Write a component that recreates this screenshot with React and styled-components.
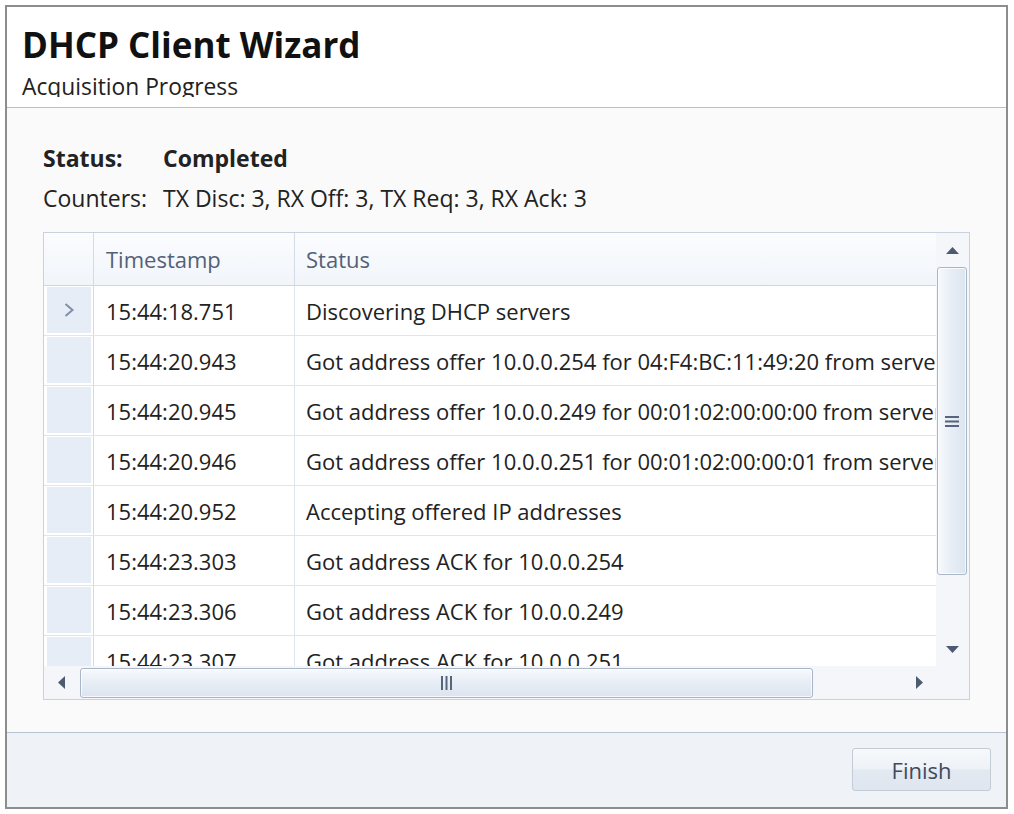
import React from "react";
import styled, { createGlobalStyle } from "styled-components";

const GlobalStyle = createGlobalStyle`
  html, body {
    margin: 0;
    padding: 0;
    background: #fff;
  }
  body {
    font-family: "Open Sans", "Liberation Sans", sans-serif;
  }
`;

const Window = styled.div`
  box-sizing: border-box;
  margin: 5px 0 0 5px;
  width: 1003px;
  height: 804px;
  border: 2px solid #8d8d8d;
  display: flex;
  flex-direction: column;
  background: #fafafa;
`;

const Header = styled.div`
  box-sizing: border-box;
  height: 101px;
  padding: 18px 0 0 15px;
  background: #fff;
  border-bottom: 1px solid #b7c1cf;
`;

const Title = styled.h1`
  margin: 0;
  font-size: 35px;
  line-height: 40px;
  font-weight: 700;
  color: #111;
`;

/* descenders are cut off by the header in the original dialog */
const Subtitle = styled.div`
  margin-top: 9px;
  height: 23px;
  overflow: hidden;
  font-size: 22.8px;
  line-height: 26px;
  color: #222;
`;

const Content = styled.div`
  flex: 1;
  padding: 37px 36px 0 36px;
`;

const InfoRow = styled.div`
  display: flex;
  font-size: 23px;
  line-height: 26px;
  color: #222;
  font-weight: ${(p) => (p.bold ? 700 : 400)};
  margin-bottom: ${(p) => p.gap}px;
`;

const InfoLabel = styled.span`
  width: 120px;
  flex-shrink: 0;
`;

const Table = styled.div`
  box-sizing: border-box;
  height: 468px;
  border: 1px solid #c8d1dd;
  display: grid;
  grid-template-columns: 1fr 33px;
  grid-template-rows: 1fr 33px;
  background: #fff;
`;

const Viewport = styled.div`
  overflow: hidden;
  background: #fff;
`;

const GridRow = styled.div`
  box-sizing: border-box;
  display: grid;
  grid-template-columns: 50px 201px 760px;
  height: ${(p) => (p.head ? 53 : 50)}px;
  border-bottom: 1px solid ${(p) => (p.head ? "#cdd6e2" : "#dde5f0")};
  background: ${(p) =>
    p.head ? "linear-gradient(#fbfcfe, #f1f5fa)" : "#fff"};
  font-size: 22px;
  color: ${(p) => (p.head ? "#536178" : "#222")};
  white-space: nowrap;
`;

const Cell = styled.div`
  box-sizing: border-box;
  display: flex;
  align-items: center;
  padding-left: ${(p) => p.pad}px;
  border-right: 1px solid ${(p) => (p.head ? "#d3dbe6" : "#dde5f0")};
  overflow: hidden;
`;

const RowHead = styled.div`
  box-sizing: border-box;
  padding: ${(p) => (p.head ? "0" : "1px 2px 2px 3px")};
  border-right: 1px solid #d3dbe6;
`;

const Marker = styled.div`
  height: 100%;
  background: #e7edf7;
  display: flex;
  align-items: center;
  justify-content: center;
`;

const VScroll = styled.div`
  display: flex;
  flex-direction: column;
  background: #f4f6fa;
`;

const HScroll = styled.div`
  display: flex;
  align-items: center;
  background: #f4f6fa;
`;

const Corner = styled.div`
  background: #f4f6fa;
`;

const ArrowBtn = styled.div`
  flex-shrink: 0;
  width: ${(p) => (p.horizontal ? "34px" : "100%")};
  height: ${(p) => (p.horizontal ? "100%" : "34px")};
  display: flex;
  align-items: center;
  justify-content: center;
`;

const Track = styled.div`
  flex: 1;
  display: flex;
  flex-direction: ${(p) => (p.horizontal ? "row" : "column")};
  align-items: ${(p) => (p.horizontal ? "center" : "stretch")};
  padding: ${(p) => (p.horizontal ? "0 0 0 2px" : "0 2px 0 1px")};
`;

const Thumb = styled.div`
  box-sizing: border-box;
  width: ${(p) => (p.horizontal ? `${p.size}px` : "100%")};
  height: ${(p) => (p.horizontal ? "30px" : `${p.size}px`)};
  border: 1px solid #a9b6c8;
  border-radius: 3px;
  background: ${(p) =>
    p.horizontal
      ? "linear-gradient(#f7f9fc 0%, #e8eef6 45%, #dce4ef 100%)"
      : "linear-gradient(90deg, #f7f9fc 0%, #e8eef6 45%, #dce4ef 100%)"};
  box-shadow: inset 0 0 0 1px rgba(255, 255, 255, 0.7);
  display: flex;
  align-items: center;
  justify-content: center;
`;

const Footer = styled.div`
  box-sizing: border-box;
  height: 75px;
  border-top: 1px solid #b7c1cf;
  background: #eff2f7;
  display: flex;
  justify-content: flex-end;
  align-items: flex-start;
  padding: 15px 15px 0 0;
`;

const Button = styled.button`
  box-sizing: border-box;
  width: 139px;
  height: 43px;
  border: 1px solid #c3cbd7;
  border-radius: 3px;
  background: linear-gradient(#f7f9fb 0%, #eef2f7 48%, #e3e9f1 52%, #dfe6ef 100%);
  font-family: "Open Sans", "Liberation Sans", sans-serif;
  font-size: 22px;
  color: #3d4b60;
  padding: 0;
`;

const Chevron = () => (
  <svg width="12" height="16" viewBox="0 0 12 16">
    <polyline
      points="2.5,2 9.5,8 2.5,14"
      fill="none"
      stroke="#7f90a8"
      strokeWidth="2"
    />
  </svg>
);

const Triangle = ({ dir }) => {
  const flat = dir === "up" || dir === "down";
  const w = flat ? 13 : 7;
  const h = flat ? 7 : 13;
  const pts = {
    up: "0,7 6.5,0 13,7",
    down: "0,0 13,0 6.5,7",
    left: "7,0 7,13 0,6.5",
    right: "0,0 7,6.5 0,13",
  }[dir];
  return (
    <svg width={w} height={h} viewBox={`0 0 ${w} ${h}`}>
      <polygon points={pts} fill="#4d5b71" />
    </svg>
  );
};

const Grip = ({ horizontal }) =>
  horizontal ? (
    <svg width="11" height="14" viewBox="0 0 11 14">
      <rect x="0" y="0" width="2" height="14" fill="#56657b" />
      <rect x="4.5" y="0" width="2" height="14" fill="#56657b" />
      <rect x="9" y="0" width="2" height="14" fill="#56657b" />
    </svg>
  ) : (
    <svg width="14" height="11" viewBox="0 0 14 11">
      <rect x="0" y="0" width="14" height="2" fill="#56657b" />
      <rect x="0" y="4.5" width="14" height="2" fill="#56657b" />
      <rect x="0" y="9" width="14" height="2" fill="#56657b" />
    </svg>
  );

const entries = [
  ["15:44:18.751", "Discovering DHCP servers"],
  ["15:44:20.943", "Got address offer 10.0.0.254 for 04:F4:BC:11:49:20 from server 10.0.0.1"],
  ["15:44:20.945", "Got address offer 10.0.0.249 for 00:01:02:00:00:00 from server 10.0.0.1"],
  ["15:44:20.946", "Got address offer 10.0.0.251 for 00:01:02:00:00:01 from server 10.0.0.1"],
  ["15:44:20.952", "Accepting offered IP addresses"],
  ["15:44:23.303", "Got address ACK for 10.0.0.254"],
  ["15:44:23.306", "Got address ACK for 10.0.0.249"],
  ["15:44:23.307", "Got address ACK for 10.0.0.251"],
];

const App = () => {
  return (
    <>
      <GlobalStyle />
      <Window>
        <Header>
          <Title>DHCP Client Wizard</Title>
          <Subtitle>Acquisition Progress</Subtitle>
        </Header>
        <Content>
          <InfoRow bold gap={14}>
            <InfoLabel>Status:</InfoLabel>
            <span>Completed</span>
          </InfoRow>
          <InfoRow gap={21}>
            <InfoLabel>Counters:</InfoLabel>
            <span>TX Disc: 3, RX Off: 3, TX Req: 3, RX Ack: 3</span>
          </InfoRow>
          <Table>
            <Viewport>
              <GridRow head>
                <RowHead head />
                <Cell head pad={12}>Timestamp</Cell>
                <Cell head pad={11}>Status</Cell>
              </GridRow>
              {entries.map(([time, text], i) => (
                <GridRow key={time}>
                  <RowHead>
                    <Marker>{i === 0 && <Chevron />}</Marker>
                  </RowHead>
                  <Cell pad={12}>{time}</Cell>
                  <Cell pad={11}>{text}</Cell>
                </GridRow>
              ))}
            </Viewport>
            <VScroll>
              <ArrowBtn>
                <Triangle dir="up" />
              </ArrowBtn>
              <Track>
                <Thumb size={308}>
                  <Grip />
                </Thumb>
              </Track>
              <ArrowBtn>
                <Triangle dir="down" />
              </ArrowBtn>
            </VScroll>
            <HScroll>
              <ArrowBtn horizontal>
                <Triangle dir="left" />
              </ArrowBtn>
              <Track horizontal>
                <Thumb horizontal size={733}>
                  <Grip horizontal />
                </Thumb>
              </Track>
              <ArrowBtn horizontal>
                <Triangle dir="right" />
              </ArrowBtn>
            </HScroll>
            <Corner />
          </Table>
        </Content>
        <Footer>
          <Button>Finish</Button>
        </Footer>
      </Window>
    </>
  );
};

export default App;
